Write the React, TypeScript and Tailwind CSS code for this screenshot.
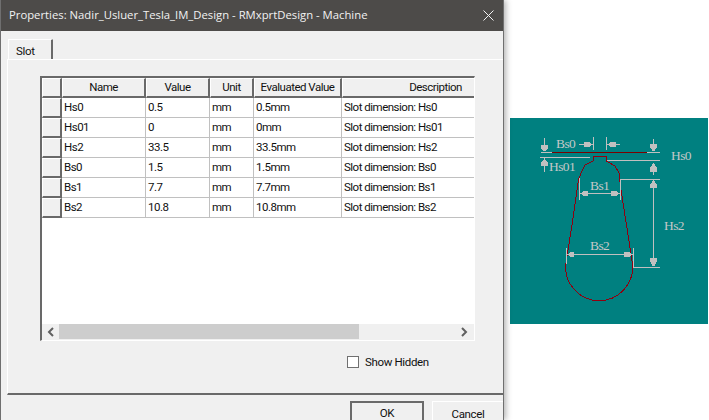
const rows = [
  ["Hs0", "0.5", "mm", "0.5mm", "Slot dimension: Hs0"],
  ["Hs01", "0", "mm", "0mm", "Slot dimension: Hs01"],
  ["Hs2", "33.5", "mm", "33.5mm", "Slot dimension: Hs2"],
  ["Bs0", "1.5", "mm", "1.5mm", "Slot dimension: Bs0"],
  ["Bs1", "7.7", "mm", "7.7mm", "Slot dimension: Bs1"],
  ["Bs2", "10.8", "mm", "10.8mm", "Slot dimension: Bs2"],
];

const headerCell =
  "h-5 flex items-center justify-center border-t border-l border-t-white border-l-white border-r-2 border-b-2 border-r-[#696969] border-b-[#696969] bg-[#f0f0f0] text-[#111]";
const bodyCell =
  "h-5 flex items-center pl-[2px] pt-px border-r border-b border-[#c0c0c0] bg-white text-[#111] whitespace-nowrap overflow-hidden";

function Header() {
  return (
    <div className="flex">
      <div className={headerCell + " w-5"} />
      <div className={headerCell + " w-[84px]"}>Name</div>
      <div className={headerCell + " w-16"}>Value</div>
      <div className={headerCell + " w-11"}>Unit</div>
      <div className={headerCell + " w-[88px]"}>Evaluated Value</div>
      <div className={headerCell + " w-[132px] pl-[54px] !border-r-0"}>Description</div>
    </div>
  );
}

function Row({ row }: { row: string[] }) {
  return (
    <div className="flex">
      <div className={headerCell + " w-5"} />
      <div className={bodyCell + " w-[84px]"}>{row[0]}</div>
      <div className={bodyCell + " w-16"}>{row[1]}</div>
      <div className={bodyCell + " w-11"}>{row[2]}</div>
      <div className={bodyCell + " w-[88px]"}>{row[3]}</div>
      <div className={bodyCell + " w-[132px] !border-r-0"}>{row[4]}</div>
    </div>
  );
}

function Scrollbar() {
  return (
    <div className="h-4 flex bg-[#f0f0f0] tracking-normal">
      <div className="w-[17px] flex items-center justify-center">
        <svg width="8" height="10" viewBox="0 0 8 10">
          <path d="M6 1 L2 5 L6 9" fill="none" stroke="#606060" strokeWidth="2" />
        </svg>
      </div>
      <div className="w-[300px] h-[15px] bg-[#cdcdcd]" />
      <div className="flex-1 flex items-center justify-end pr-[6px]">
        <svg width="8" height="10" viewBox="0 0 8 10">
          <path d="M2 1 L6 5 L2 9" fill="none" stroke="#606060" strokeWidth="2" />
        </svg>
      </div>
    </div>
  );
}

// gray dimension line
function Ln({ d }: { d: string }) {
  return <path d={d} fill="none" stroke="#c0c0c0" strokeWidth="1" />;
}

function Label({ x, y, t }: { x: number; y: number; t: string }) {
  return (
    <text x={x} y={y} fill="#c4c8c8" fontSize="13.5" letterSpacing="-0.6" fontFamily="'Liberation Serif', serif">
      {t}
    </text>
  );
}

function SlotDiagram() {
  return (
    <svg width="198" height="206" viewBox="0 0 198 206" shapeRendering="crispEdges">
      <Ln d="M30.5 34.5H42M137 34.5H150M30 39.5H80M97 42.5H150M110.5 61.5H150M123 149.5H150" />
      <path d="M42 34.5H137" stroke="#7a0000" strokeWidth="1" fill="none" />
      <path
        d="M83 38.5H96.5V43 L105 48 L109 55 L111 72 L116.5 107 L122.5 146 A33.5 33.5 0 1 1 55.8 146 L62 107 L68.5 62 L71 55 L75 47 L83 43 V38.5"
        stroke="#8f0010"
        strokeWidth="1"
        fill="none"
      />
      {/* Bs0 */}
      <Ln d="M34.5 20V33M69 26.5H83M83.5 19V32M96.5 19V32M97 26.5H110M143.5 21V33M143.5 45V57M34.5 40V54" />
      <path d="M31 27H38V30L35.5 33H33.5L31 30Z" fill="#c0c0c0" />
      <path d="M31 48H38V45L35.5 42H33.5L31 45Z" fill="#c0c0c0" />
      <path d="M140 26H147V29L144.5 33H142.5L140 29Z" fill="#c0c0c0" />
      <path d="M140 54H147V50L144.5 46H142.5L140 50Z" fill="#c0c0c0" />
      <path d="M74 24H79L83 26.5L79 29H74Z" fill="#c0c0c0" />
      <path d="M106 24H101L97 26.5L101 29H106Z" fill="#c0c0c0" />
      {/* Bs1 */}
      <Ln d="M69.5 60V82M110.5 61V82M70 75.5H110" />
      <path d="M78 73H74L70 75.5L74 78H78Z" fill="#c0c0c0" />
      <path d="M101 73H106L110 75.5L106 78H101Z" fill="#c0c0c0" />
      {/* Hs2 */}
      <Ln d="M143.5 62V147" />
      <path d="M140 70H147V67L144.5 63H142.5L140 67Z" fill="#c0c0c0" />
      <path d="M140 140H147V143L144.5 148H142.5L140 143Z" fill="#c0c0c0" />
      {/* Bs2 */}
      <Ln d="M56.5 130V146M123.5 130V149M57 136.5H123" />
      <path d="M64 134H61L57 136.5L61 139H64Z" fill="#c0c0c0" />
      <path d="M114 134H119L123 136.5L119 139H114Z" fill="#c0c0c0" />
      <Label x={46} y={30} t="Bs0" />
      <Label x={39} y={53} t="Hs01" />
      <Label x={161} y={42} t="Hs0" />
      <Label x={80} y={72} t="Bs1" />
      <Label x={154} y={112} t="Hs2" />
      <Label x={80} y={132} t="Bs2" />
    </svg>
  );
}

export default function App() {
  return (
    <div className="w-[709px] h-[420px] flex overflow-hidden bg-white text-[11.5px] tracking-[-0.35px] font-['Roboto',sans-serif]">
      <div className="w-[504px] h-[420px] shrink-0 flex flex-col bg-[#f0f0f0] border-l border-r border-[#6f6f6f] shadow-[2px_0_6px_rgba(0,0,0,0.3)] z-10">
        <div className="h-[31px] shrink-0 flex items-center justify-between pl-2 pr-[9px] bg-[#4d4b49] text-[#f2f2f2] text-[11.3px] tracking-normal font-['Open_Sans',sans-serif]">
          <span>Properties: Nadir_Usluer_Tesla_IM_Design - RMxprtDesign - Machine</span>
          <svg width="11" height="11" viewBox="0 0 11 11">
            <path d="M0.5 0.5 L10.5 10.5 M10.5 0.5 L0.5 10.5" stroke="#f2f2f2" strokeWidth="1" />
          </svg>
        </div>

        <div className="h-7 shrink-0 flex items-end pl-[7px]">
          <div className="w-[45px] h-5 pl-[7px] pt-[3px] bg-[#f0f0f0] border-l border-t border-white border-r-2 border-r-[#696969] text-[#111] rounded-t-[1px]">
            Slot
          </div>
        </div>

        <div className="h-[336px] shrink-0 ml-[6px] pl-[32px] pt-4 border-l border-t border-white border-b-2 border-b-[#696969]">
          <div className="w-[435px] h-[265px] flex flex-col border-l-2 border-t-2 border-[#696969] border-r border-b border-r-white border-b-white text-[11.5px] tracking-[-0.5px]">
            <div className="flex-1 bg-white">
              <Header />
              {rows.map((row, i) => (
                <Row key={i} row={row} />
              ))}
            </div>
            <Scrollbar />
          </div>
          <div className="mt-3 ml-[307px] flex items-center gap-[6px] text-[#111]">
            <div className="w-3 h-3 bg-white border border-[#707070]" />
            <span className="pt-px">Show Hidden</span>
          </div>
        </div>

        <div className="flex-1 flex items-start justify-end pt-[6px] gap-2 text-[#111]">
          <div className="w-[74px] h-10 pb-[14px] flex items-center justify-center border-2 border-[#6a6a6a] bg-[#f0f0f0]">
            OK
          </div>
          <div className="w-[71px] h-10 pb-[14px] flex items-center justify-center border-t border-l border-white bg-[#f0f0f0]">
            Cancel
          </div>
        </div>
      </div>

      <div className="ml-[6px] mt-[118px] w-[198px] h-[206px] bg-[#008080]">
        <SlotDiagram />
      </div>
    </div>
  );
}
